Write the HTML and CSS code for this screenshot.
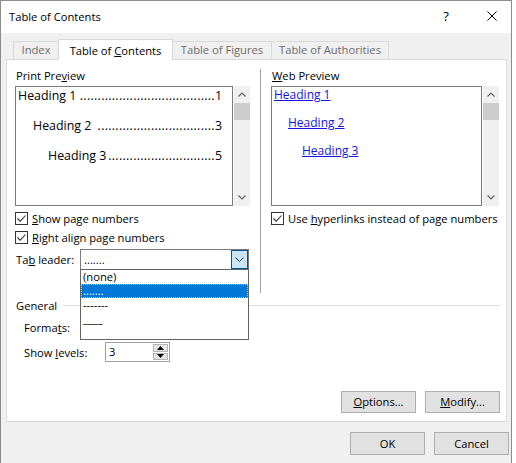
FILE: index.html
```html
<!DOCTYPE html>
<html>
<head>
<meta charset="utf-8">
<title>Table of Contents</title>
<link rel="stylesheet" href="styles.css">
</head>
<body>
<div class="dialog">
  <div class="titlebar">
    <span class="title">Table of Contents</span>
    <span class="help">?</span>
    <span class="close"><svg width="10" height="10" viewBox="0 0 10 10"><path d="M0.5 0.5 L9.5 9.5 M9.5 0.5 L0.5 9.5" stroke="#000" stroke-width="1" fill="none"/></svg></span>
  </div>
  <div class="tabs">
    <div class="tab tab-index">Index</div>
    <div class="tab tab-active">Table of <u>C</u>ontents</div>
    <div class="tab tab-figures">Table of Figures</div>
    <div class="tab tab-auth">Table of Authorities</div>
  </div>
  <div class="panel">
    <div class="top">
      <div class="col">
        <div class="label">Print Pre<u>v</u>iew</div>
        <div class="preview">
          <div class="pbox">
            <div class="prow"><span class="ptext">Heading 1&nbsp;</span><span class="dots">......................................</span><span class="pnum">1</span></div>
            <div class="prow lvl2"><span class="ptext">Heading 2&nbsp;</span><span class="dots">.................................</span><span class="pnum">3</span></div>
            <div class="prow lvl3"><span class="ptext">Heading 3</span><span class="dots">..............................</span><span class="pnum">5</span></div>
          </div>
          <div class="scroll">
            <div class="arrow"><svg width="8" height="5" viewBox="0 0 8 5"><path d="M0.5 4.5 L4 1 L7.5 4.5" stroke="#606060" stroke-width="1.2" fill="none"/></svg></div>
            <div class="thumb"></div>
            <div class="track"></div>
            <div class="arrow"><svg width="8" height="5" viewBox="0 0 8 5"><path d="M0.5 0.5 L4 4 L7.5 0.5" stroke="#606060" stroke-width="1.2" fill="none"/></svg></div>
          </div>
        </div>
        <div class="check first">
          <span class="cb"><svg width="11" height="11" viewBox="0 0 11 11"><path d="M1.5 5.5 L4.2 8.2 L9.5 2.5" stroke="#333" stroke-width="1.1" fill="none"/></svg></span>
          <span><u>S</u>how page numbers</span>
        </div>
        <div class="check">
          <span class="cb"><svg width="11" height="11" viewBox="0 0 11 11"><path d="M1.5 5.5 L4.2 8.2 L9.5 2.5" stroke="#333" stroke-width="1.1" fill="none"/></svg></span>
          <span><u>R</u>ight align page numbers</span>
        </div>
        <div class="leader">
          <span class="leader-label">Ta<u>b</u> leader:</span>
          <div class="combo">
            <span class="combo-val">.......</span>
            <span class="combo-btn"><svg width="9" height="5" viewBox="0 0 9 5"><path d="M0.5 0.5 L4.5 4.5 L8.5 0.5" stroke="#333" stroke-width="1" fill="none"/></svg></span>
            <div class="droplist">
              <div class="item">(none)</div>
              <div class="item selected">.......</div>
              <div class="item">-------</div>
              <div class="item">____</div>
            </div>
          </div>
        </div>
      </div>
      <div class="sep"></div>
      <div class="col">
        <div class="label"><u>W</u>eb Preview</div>
        <div class="preview">
          <div class="pbox web">
            <div class="wrow"><span class="link">Heading 1</span></div>
            <div class="wrow lvl2"><span class="link">Heading 2</span></div>
            <div class="wrow lvl3"><span class="link">Heading 3</span></div>
          </div>
          <div class="scroll">
            <div class="arrow"><svg width="8" height="5" viewBox="0 0 8 5"><path d="M0.5 4.5 L4 1 L7.5 4.5" stroke="#606060" stroke-width="1.2" fill="none"/></svg></div>
            <div class="thumb"></div>
            <div class="track"></div>
            <div class="arrow"><svg width="8" height="5" viewBox="0 0 8 5"><path d="M0.5 0.5 L4 4 L7.5 0.5" stroke="#606060" stroke-width="1.2" fill="none"/></svg></div>
          </div>
        </div>
        <div class="check first">
          <span class="cb"><svg width="11" height="11" viewBox="0 0 11 11"><path d="M1.5 5.5 L4.2 8.2 L9.5 2.5" stroke="#333" stroke-width="1.1" fill="none"/></svg></span>
          <span>Use <u>h</u>yperlinks instead of page numbers</span>
        </div>
      </div>
    </div>
    <div class="general">
      <span>General</span>
      <span class="gline"></span>
    </div>
    <div class="formats">Forma<u>t</u>s:</div>
    <div class="levels">
      <span class="levels-label">Show <u>l</u>evels:</span>
      <div class="spin">
        <span class="spin-val">3</span>
        <span class="spin-btns">
          <span class="spin-btn"><svg width="7" height="4" viewBox="0 0 7 4"><path d="M0 4 L3.5 0 L7 4Z" fill="#000"/></svg></span>
          <span class="spin-btn"><svg width="7" height="4" viewBox="0 0 7 4"><path d="M0 0 L3.5 4 L7 0Z" fill="#000"/></svg></span>
        </span>
      </div>
    </div>
    <div class="spacer"></div>
    <div class="btnrow">
      <div class="btn"><u>O</u>ptions...</div>
      <div class="btn"><u>M</u>odify...</div>
    </div>
  </div>
  <div class="footer">
    <div class="btn big">OK</div>
    <div class="btn big">Cancel</div>
  </div>
</div>
</body>
</html>
```
FILE: styles.css
```css
html, body {
  margin: 0;
  padding: 0;
  background: #ffffff;
}
body {
  font-family: "Open Sans", "Noto Sans", sans-serif;
  font-size: 11.2px;
  color: #000;
}
u {
  text-decoration: underline;
  text-underline-offset: 1px;
}
.dialog {
  width: 512px;
  height: 463px;
  box-sizing: border-box;
  border: 1px solid #8c8c8c;
  border-bottom: none;
  background: #f0f0f0;
  display: flex;
  flex-direction: column;
}
.titlebar {
  flex: none;
  height: 32px;
  background: #fff;
  display: flex;
  align-items: center;
}
.title {
  flex: 1;
  padding-left: 8px;
  padding-bottom: 2px;
}
.help {
  width: 20px;
  text-align: center;
  font-size: 13px;
  margin-right: 26px;
  padding-bottom: 2px;
}
.close {
  width: 20px;
  margin-right: 9px;
  display: flex;
  justify-content: center;
  padding-bottom: 2px;
}
.tabs {
  flex: none;
  height: 27px;
  box-sizing: border-box;
  padding-left: 12px;
  display: flex;
  align-items: flex-end;
  margin-bottom: -1px;
  position: relative;
  z-index: 1;
}
.tab {
  height: 18px;
  box-sizing: border-box;
  margin-bottom: 1px;
  border: 1px solid #d9d9d9;
  border-bottom: none;
  background: #f0f0f0;
  color: #6d6d6d;
  text-align: center;
  line-height: 16px;
  white-space: nowrap;
}
.tab-index {
  width: 45px;
  border-right: none;
}
.tab-active {
  width: 115px;
  height: 21px;
  margin-bottom: 0;
  background: #fff;
  color: #000;
  line-height: 22px;
}
.tab-figures {
  width: 99px;
  border-left: none;
}
.tab-auth {
  width: 117px;
  border-left: none;
}
.panel {
  flex: none;
  height: 363px;
  margin: 0 4px 0 5px;
  box-sizing: border-box;
  border: 1px solid #d9d9d9;
  background: #fff;
  padding: 8px 6px 8px 8px;
  display: flex;
  flex-direction: column;
}
.top {
  display: grid;
  grid-template-columns: 235px 1px 228px;
  column-gap: 10px;
  height: 225px;
}
.col {
  min-width: 0;
}
.sep {
  background: #a0a0a0;
  margin-top: 1px;
}
.label {
  height: 16px;
  line-height: 16px;
  margin-bottom: 2px;
  padding-left: 1px;
}
.preview {
  display: flex;
  gap: 1px;
  height: 120px;
}
.pbox {
  flex: 1;
  min-width: 0;
  box-sizing: border-box;
  border: 1px solid #7a7a7a;
  padding: 0 10px 0 2px;
  font-size: 12.4px;
}
.prow {
  display: flex;
  height: 18px;
  line-height: 18px;
  margin-bottom: 12px;
  white-space: nowrap;
}
.prow.lvl2 { padding-left: 15px; }
.prow.lvl3 { padding-left: 30px; }
.ptext, .pnum {
  flex: none;
}
.dots {
  flex: 1;
  text-align: right;
  letter-spacing: 0.3px;
}
.pbox.web {
  font-size: 12px;
  padding: 0 2px;
}
.wrow {
  height: 16px;
  line-height: 16px;
  margin-bottom: 12px;
  white-space: nowrap;
}
.wrow.lvl2 { padding-left: 14px; }
.wrow.lvl3 { padding-left: 28px; }
.link {
  color: #1515e0;
  text-decoration: underline;
  text-underline-offset: 1px;
}
.scroll {
  width: 16px;
  flex: none;
  background: #f0f0f0;
  display: flex;
  flex-direction: column;
}
.arrow {
  height: 17px;
  display: flex;
  align-items: center;
  justify-content: center;
}
.thumb {
  height: 17px;
  background: #cdcdcd;
}
.track { flex: 1; }
.check {
  display: flex;
  align-items: center;
  gap: 4px;
  height: 19px;
  white-space: nowrap;
}
.check.first { margin-top: 3px; }
.cb {
  width: 13px;
  height: 13px;
  flex: none;
  box-sizing: border-box;
  border: 1px solid #333;
  background: #fff;
  display: flex;
  align-items: center;
  justify-content: center;
}
.leader {
  margin-top: 2px;
  display: flex;
  align-items: center;
  height: 21px;
}
.leader-label {
  width: 65px;
  padding-left: 1px;
  box-sizing: border-box;
}
.combo {
  width: 169px;
  height: 21px;
  box-sizing: border-box;
  border: 1px solid #7a7a7a;
  background: #fff;
  display: flex;
  align-items: center;
  position: relative;
}
.combo-val {
  flex: 1;
  padding-left: 3px;
  line-height: 16px;
}
.combo-btn {
  width: 17px;
  height: 19px;
  box-sizing: border-box;
  background: #cce4f7;
  border: 1px solid #005499;
  display: flex;
  align-items: center;
  justify-content: center;
}
.droplist {
  position: absolute;
  top: 19px;
  left: -1px;
  width: 169px;
  height: 71px;
  box-sizing: border-box;
  border: 1px solid #646464;
  background: #fff;
  z-index: 5;
}
.item {
  height: 14px;
  line-height: 14px;
  padding-left: 2px;
  box-sizing: border-box;
  white-space: nowrap;
}
.item.selected {
  background: #0078d7;
  color: #fff;
  outline: 1px dotted #a9cdee;
  outline-offset: -1px;
}
.general {
  margin-top: 4px;
  height: 16px;
  display: flex;
  align-items: center;
  padding-left: 1px;
}
.gline {
  flex: 1;
  height: 1px;
  background: #dcdcdc;
  margin-left: 6px;
}
.formats {
  margin-top: 7px;
  height: 16px;
  line-height: 16px;
  padding-left: 9px;
}
.levels {
  margin-top: 6px;
  height: 20px;
  display: flex;
  align-items: center;
  padding-left: 9px;
}
.levels-label {
  width: 81px;
}
.spin {
  width: 65px;
  height: 20px;
  box-sizing: border-box;
  border: 1px solid #a0a0a0;
  display: flex;
  align-items: stretch;
}
.spin-val {
  flex: 1;
  padding-left: 3px;
  line-height: 18px;
}
.spin-btns {
  width: 16px;
  display: flex;
  flex-direction: column;
  gap: 1px;
  padding: 1px 1px 1px 0;
  box-sizing: border-box;
}
.spin-btn {
  flex: 1;
  background: #e6e6e6;
  border: 1px solid #b4b4b4;
  display: flex;
  align-items: center;
  justify-content: center;
}
.spacer { flex: 1; }
.btnrow {
  display: flex;
  justify-content: flex-end;
  gap: 9px;
}
.btn {
  width: 75px;
  height: 22px;
  box-sizing: border-box;
  background: #e1e1e1;
  border: 1px solid #adadad;
  text-align: center;
  line-height: 20px;
}
.btn.big {
  height: 23px;
  line-height: 21px;
}
.footer {
  margin-top: 10px;
  display: flex;
  justify-content: flex-end;
  gap: 9px;
  padding-right: 2px;
}
```
